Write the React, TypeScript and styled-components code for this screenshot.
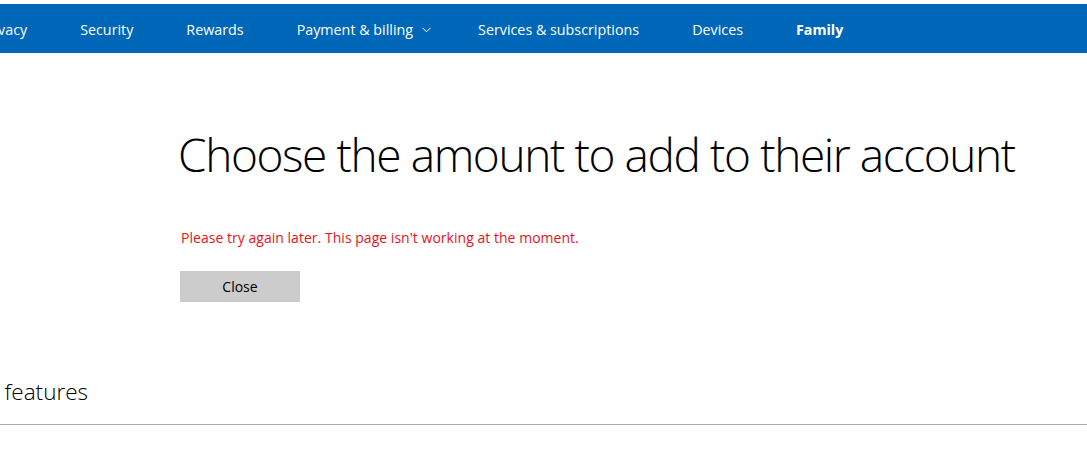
import React from "react";
import styled, { createGlobalStyle } from "styled-components";

const GlobalStyle = createGlobalStyle`
  html, body {
    margin: 0;
    padding: 0;
    background: #ffffff;
    overflow: hidden;
  }
  body {
    font-family: "Open Sans", "Noto Sans", "Liberation Sans", sans-serif;
    color: #000000;
  }
`;

const Page = styled.div`
  width: 1087px;
  height: 471px;
  padding-top: 4px;
  box-sizing: border-box;
  overflow: hidden;
  display: flex;
  flex-direction: column;
`;

const NavBar = styled.nav`
  height: 49px;
  background: #0067b8;
  display: flex;
  align-items: center;
  overflow: hidden;
`;

const NavList = styled.ul`
  list-style: none;
  margin: 0 0 0 -20px;
  padding: 2px 0 0 0;
  display: flex;
  align-items: center;
  gap: 53px;
`;

const NavItem = styled.li<{ $active?: boolean }>`
  display: flex;
  align-items: center;
  gap: 9px;
  color: #ffffff;
  font-size: 14.3px;
  letter-spacing: 0;
  font-weight: ${(p) => (p.$active ? 700 : 400)};
  white-space: nowrap;
`;

const Chevron = styled.svg`
  width: 9px;
  height: 6px;
  margin-top: 1px;
  margin-right: -6px;
`;

const Main = styled.main`
  padding-left: 180px;
  display: flex;
  flex-direction: column;
  align-items: flex-start;
`;

const Heading = styled.h1`
  margin: 69px 0 0 -2px;
  font-size: 46px;
  font-weight: 300;
  line-height: 64px;
  letter-spacing: -1.4px;
  white-space: nowrap;
  color: #000000;
`;

const ErrorText = styled.p`
  margin: 43px 0 0 1px;
  color: #e81123;
  font-size: 14px;
  letter-spacing: 0.03px;
  line-height: 18px;
`;

const CloseButton = styled.button`
  margin-top: 24px;
  width: 120px;
  height: 31px;
  border: none;
  background: #cccccc;
  color: #000000;
  font-family: inherit;
  font-size: 14px;
  padding: 0;
  cursor: pointer;
`;

const Section = styled.section`
  margin-top: 76px;
  border-bottom: 1px solid #a8a8a8;
  padding: 0 0 18px 0;
  overflow: hidden;
`;

const SectionTitle = styled.h2`
  margin: 0 0 0 -55px;
  font-size: 22.5px;
  font-weight: 300;
  line-height: 28px;
  letter-spacing: 0;
  white-space: nowrap;
`;

const navItems = [
  "Privacy",
  "Security",
  "Rewards",
  "Payment & billing",
  "Services & subscriptions",
  "Devices",
  "Family",
];

export default function App() {
  return (
    <>
      <GlobalStyle />
      <Page>
        <NavBar>
          <NavList>
            {navItems.map((item) => (
              <NavItem key={item} $active={item === "Family"}>
                {item}
                {item === "Payment & billing" && (
                  <Chevron viewBox="0 0 9 6" fill="none">
                    <path d="M0.5 0.8 L4.5 4.8 L8.5 0.8" stroke="#ffffff" strokeWidth="1" />
                  </Chevron>
                )}
              </NavItem>
            ))}
          </NavList>
        </NavBar>
        <Main>
          <Heading>Choose the amount to add to their account</Heading>
          <ErrorText>Please try again later. This page isn't working at the moment.</ErrorText>
          <CloseButton>Close</CloseButton>
        </Main>
        <Section>
          <SectionTitle>More features</SectionTitle>
        </Section>
      </Page>
    </>
  );
}
